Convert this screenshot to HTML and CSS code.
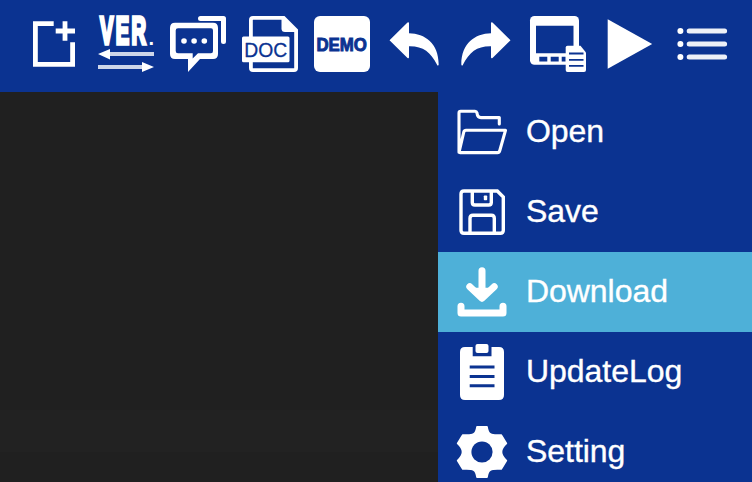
FILE: index.html
```html
<!DOCTYPE html>
<html lang="en">
<head>
<meta charset="utf-8">
<title>Editor</title>
<link rel="stylesheet" href="styles.css">
</head>
<body>
<div class="app">
  <header class="toolbar">
    <svg class="icon" viewBox="0 0 56 56"><path class="line" stroke-width="4.8" d="M27.7 7.7H9.4V48.3H46.6V26.3M39 5.3V24.7M29.7 15H49"/></svg>
    <svg class="icon" viewBox="0 0 56 56">
      <text class="ver" transform="translate(2 27.7) scale(.53 1)" textLength="87" lengthAdjust="spacing">VER</text>
      <text class="ver-dot" x="50.6" y="29">.</text>
      <path class="line soft" stroke-width="4" d="M6 38H56M0 51H50"/>
      <path d="M0 38L12 33V43.4ZM56 51L44 46V56Z"/>
    </svg>
    <svg class="icon" viewBox="0 0 56 56">
      <path class="line round" stroke-width="5" d="M30.5 2.5H53.5V25.5"/>
      <path fill-rule="evenodd" d="M5 6.7H43Q48 6.7 48 12V38Q48 43 43 43H30L18 56V43H5Q0 43 0 38V12Q0 6.7 5 6.7ZM8 12.3Q5.7 12.3 5.7 14.5V35Q5.7 37.3 8 37.3H22.7V42.5L28 37.3H41Q43 37.3 43 35V14.5Q43 12.3 41 12.3Z"/>
      <circle cx="14" cy="25" r="2.8"/><circle cx="24.1" cy="25" r="2.8"/><circle cx="34.3" cy="25" r="2.8"/>
    </svg>
    <svg class="icon" viewBox="0 0 56 56">
      <path class="line" stroke-width="3.8" d="M42 1.9H11Q8.9 1.9 8.9 4V52Q8.9 54.1 11 54.1H52Q54.1 54.1 54.1 52V14"/>
      <path d="M39.5 0H42.5L56 13.5V16H43Q39.5 16 39.5 12.5Z"/>
      <rect y="20.5" width="47.5" height="25.7" rx="1.5"/>
      <text class="doc" x="2.2" y="40.6" textLength="43" lengthAdjust="spacingAndGlyphs">DOC</text>
    </svg>
    <svg class="icon" viewBox="0 0 56 56">
      <rect width="56" height="56" rx="6"/>
      <text class="demo" x="2.4" y="34.7" textLength="50.5" lengthAdjust="spacingAndGlyphs">DEMO</text>
    </svg>
    <svg class="icon" viewBox="0 0 56 56"><path d="M3.5 24.3L21.5 6.5Q23 5.5 23 7.5V17.3C39 17.7 52.5 27 52.7 48.5Q52.2 50.5 51.2 49C44.5 36 37 30 23 30.3V41Q23 43 21.5 42Z"/></svg>
    <svg class="icon" viewBox="0 0 56 56"><path transform="matrix(-1 0 0 1 56 0)" d="M3.5 24.3L21.5 6.5Q23 5.5 23 7.5V17.3C39 17.7 52.5 27 52.7 48.5Q52.2 50.5 51.2 49C44.5 36 37 30 23 30.3V41Q23 43 21.5 42Z"/></svg>
    <svg class="icon" viewBox="0 0 56 56">
      <rect width="49" height="48.7" rx="4.5"/>
      <path class="cut" d="M6 9.7H43.5V37.3H6ZM9.3 40.8H17.3V45.6H9.3ZM20.7 40.8H28.7V45.6H20.7ZM31.7 40.8H35.7V45.6H31.7Z"/>
      <path d="M37.5 29.7H50.5L56 36.5V54Q56 56 54 56H37.5Q35.7 56 35.7 54V31.5Q35.7 29.7 37.5 29.7Z"/>
      <path class="cut-line" stroke-width="1.8" d="M39 37.5H53.5M39 43.8H53.5M39 49.8H53.5"/>
    </svg>
    <svg class="icon" viewBox="0 0 56 56"><path d="M5.7 3.2L50.2 28L5.7 52.8Z"/></svg>
    <svg class="icon" viewBox="0 0 56 56">
      <circle cx="6.4" cy="15.1" r="3"/><circle cx="6.4" cy="27.9" r="3"/><circle cx="6.4" cy="41" r="3"/>
      <path class="line round bars" stroke-width="5" d="M15.2 15H50.6M15.2 28H50.6M15.2 41H50.6"/>
    </svg>
  </header>
  <div class="workspace">
    <main class="canvas"><div class="canvas-band"></div></main>
    <nav class="menu">
      <a class="item">
        <svg class="icon" viewBox="0 0 56 56"><path class="line round" stroke-width="3.1" d="M5 48.3V9Q5 7.3 6.7 7.3H21Q22.5 7.3 23 9Q23.5 13.6 27 13.6H45.3V20M5 48.3L9.8 28Q10.3 26.3 12 26.3H51.5L45.8 46.5Q45.2 48.6 43.5 48.6H6"/></svg>
        <span class="label">Open</span>
      </a>
      <a class="item">
        <svg class="icon" viewBox="0 0 56 56"><path class="line" stroke-width="3.4" d="M10 7H43.3L49.3 13V46.3Q49.3 49.3 46.3 49.3H10Q7 49.3 7 46.3V10Q7 7 10 7ZM18.3 7V18.5Q18.3 21 20.8 21H34.8Q37.3 21 37.3 18.5V7M16 49.3V34.3Q16 31.3 19 31.3H37.3Q40.3 31.3 40.3 34.3V49.3"/><rect x="29.8" y="11.5" width="3.4" height="4.8" rx=".8"/></svg>
        <span class="label">Save</span>
      </a>
      <a class="item item-active">
        <svg class="icon" viewBox="0 0 56 56"><path class="line round" stroke-width="7" d="M28 6.8V32M15.8 22.7L28 34.2L40.2 22.7M7 42.2V49H49V42.2"/><path d="M19 23.7H37L28 34Z"/></svg>
        <span class="label">Download</span>
      </a>
      <a class="item">
        <svg class="icon" viewBox="0 0 56 56">
          <path d="M11 3H18.7V12.3H37.5V3H45Q50 3 50 8V51Q50 56 45 56H11Q6 56 6 51V8Q6 3 11 3Z"/>
          <rect x="21.5" width="13" height="9" rx="2"/>
          <path class="cut-line" stroke-width="3" d="M15.7 23H40.5M15.7 32.4H40.5M15.7 41.8H40.5"/>
        </svg>
        <span class="label">UpdateLog</span>
      </a>
      <a class="item">
        <svg class="icon" viewBox="0 0 56 56">
          <path class="gear" d="M23 2.8H33Q34 9 36.5 10Q38.5 11.5 47.2 11L52.4 19.5Q47.5 24 47.5 28Q47.5 32 52.4 36.5L47.2 45Q38.5 44.5 36.5 46Q34 47 33 53.2H23Q22 47 19.5 46Q17.5 44.5 8.8 45L3.6 36.5Q8.5 32 8.5 28Q8.5 24 3.6 19.5L8.8 11Q17.5 11.5 19.5 10Q22 9 23 2.8Z"/>
          <circle class="cut" cx="28" cy="28" r="10.6"/>
        </svg>
        <span class="label">Setting</span>
      </a>
    </nav>
  </div>
</div>
</body>
</html>
```

FILE: styles.css
```css
:root {
  --blue: #0b3391;
  --sky: #4eb0d8;
}

* {
  box-sizing: border-box;
}

body {
  margin: 0;
  overflow: hidden;
  font-family: "Liberation Sans", Arial, sans-serif;
}

.app {
  display: flex;
  flex-direction: column;
  height: 482px;
  background: #202020;
}

.toolbar {
  display: flex;
  flex: none;
  gap: 16px;
  height: 92px;
  padding: 16px 22px 20px 26px;
  background: var(--blue);
}

.icon {
  display: block;
  flex: none;
  width: 56px;
  height: 56px;
  overflow: visible;
  fill: #fff;
}

.line {
  fill: none;
  stroke: #fff;
}

.round {
  stroke-linecap: round;
  stroke-linejoin: round;
}

.soft {
  opacity: .8;
}

.bars {
  opacity: .93;
}

.cut {
  fill: var(--blue);
}

.cut-line {
  fill: none;
  stroke: var(--blue);
}

.gear {
  stroke: #fff;
  stroke-width: 1.6;
  stroke-linejoin: round;
}

.ver {
  font-size: 38px;
  font-weight: 700;
  stroke: #fff;
  stroke-width: 3.6;
}

.ver-dot {
  font-size: 20px;
  font-weight: 700;
}

.doc {
  font-size: 20.5px;
  fill: var(--blue);
  stroke: var(--blue);
  stroke-width: .3;
}

.demo {
  font-size: 19px;
  font-weight: 700;
  fill: var(--blue);
  stroke: var(--blue);
  stroke-width: 1;
}

.workspace {
  display: flex;
  flex: 1;
  min-height: 0;
}

.canvas {
  flex: 1;
  padding-top: 318px;
}

.canvas-band {
  height: 42px;
  background: #222;
}

.menu {
  width: 314px;
  overflow: hidden;
  background: var(--blue);
}

.item {
  display: flex;
  align-items: center;
  gap: 16px;
  height: 80px;
  padding: 0 16px;
  color: #fff;
  font-size: 32px;
}

.item-active {
  background: var(--sky);
}

.label {
  padding-bottom: 2px;
  letter-spacing: -.05px;
  -webkit-text-stroke: .35px #fff;
}
```
